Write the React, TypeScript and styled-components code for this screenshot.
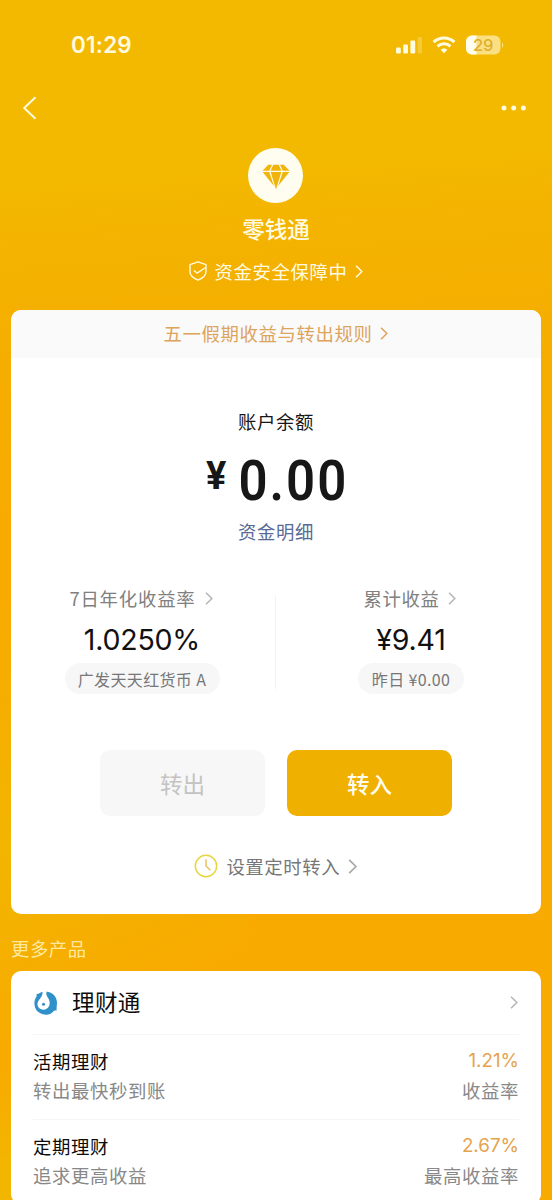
import React from "react";
import styled, { createGlobalStyle } from "styled-components";

const cjk = `"Noto Sans CJK SC", sans-serif`;

const GlobalStyle = createGlobalStyle`
  * { box-sizing: border-box; }
  body { margin: 0; background: #f6ae00; }
`;

const Page = styled.main`
  width: 552px;
  height: 1200px;
  overflow: hidden;
  display: flex;
  flex-direction: column;
  font-family: ${cjk};
  color: #171717;
  background:
    linear-gradient(155deg, rgba(242, 181, 0, 1) 0, rgba(242, 181, 0, 0) 70%) 0 850px / 250px 190px no-repeat,
    linear-gradient(180deg, rgba(242, 180, 0, 0), #f2b500 70%) 0 1070px / 12px 130px no-repeat,
    linear-gradient(180deg, rgba(242, 181, 0, 0), #f2b500) 0 600px / 12px 250px no-repeat,
    linear-gradient(176deg, #f3b900 0, #f3b800 15%, #f4b100 23%, #f6ad00 32%, #f8aa00 42%, #f8aa00 100%);

  > * {
    flex-shrink: 0;
  }
`;

const StatusBar = styled.header`
  display: flex;
  justify-content: space-between;
  align-items: center;
  height: 90px;
  padding: 0 48px 0 71px;
  color: #fffbe0;
`;

const Clock = styled.time`
  font: 600 22.4px/26px Inter, sans-serif;
  letter-spacing: 0.25px;
`;

const StatusIcons = styled.div`
  display: flex;
  align-items: center;
  gap: 10px;
`;

const NavBar = styled.nav`
  display: flex;
  justify-content: space-between;
  align-items: center;
  height: 35px;
  padding: 0 25px 0 22px;
`;

const Hero = styled.section`
  display: flex;
  flex-direction: column;
  align-items: center;
  height: 185px;
  padding-top: 23px;
  color: #fffbe3;
`;

const Emblem = styled.div`
  display: grid;
  place-items: center;
  width: 55px;
  height: 55px;
  padding-top: 2px;
  margin-right: 1px;
  border-radius: 50%;
  background: #fffdf0;
`;

const Title = styled.h1`
  margin: 9px 0 0;
  font-size: 22.5px;
  line-height: 32px;
  font-weight: 500;
`;

const IconRow = styled.div<{ $gap: number }>`
  display: flex;
  align-items: center;
  justify-content: center;
  gap: ${(p) => p.$gap}px;
`;

const Secure = styled(IconRow)`
  height: 28px;
  margin-top: 13px;
`;

const Text = styled.span<{ $color?: string; $spacing?: number }>`
  font-size: 18.4px;
  line-height: 28px;
  letter-spacing: ${(p) => p.$spacing ?? 0.6}px;
  color: ${(p) => p.$color ?? "inherit"};
  white-space: nowrap;
`;

const Card = styled.section<{ $height: number }>`
  height: ${(p) => p.$height}px;
  margin: 0 11px;
  border-radius: 10px;
  background: #fff;
  overflow: hidden;
`;

const Notice = styled(IconRow)`
  height: 48px;
  padding-bottom: 2px;
  background: #fafafb;
`;

const Balance = styled.div`
  display: flex;
  flex-direction: column;
  align-items: center;
  padding-top: 49px;
`;

const Amount = styled.div`
  display: flex;
  align-items: flex-start;
  gap: 11px;
  height: 66px;
  margin: 13px 0 3px;
  padding-left: 2px;
  font: 600 56px/66px Roboto, sans-serif;
`;

const Currency = styled.span`
  display: flex;
  justify-content: center;
  width: 21px;
  font-size: 38px;
  line-height: 57px;
  font-weight: 700;
`;

const Figure = styled.span`
  margin: 0 -5px;
  letter-spacing: 2.2px;
  transform: scaleX(0.91);
`;

const Stats = styled.div`
  display: grid;
  grid-template-columns: 264px 1px 1fr;
  height: 110px;
  margin-top: 39px;
`;

const Stat = styled.div<{ $padding: string }>`
  display: flex;
  flex-direction: column;
  align-items: center;
  padding: ${(p) => p.$padding};
`;

const StatLabel = styled(IconRow)`
  margin-right: 2px;
`;

const Rule = styled.div`
  height: 94px;
  margin-top: 11px;
  background: #f3f3f3;
`;

const Value = styled.strong`
  font: 400 28.5px/36px Inter, sans-serif;
  letter-spacing: -0.2px;
  margin: 10px 0 5px;
  color: #111;
`;

const Pill = styled.span<{ $width: number }>`
  display: grid;
  place-items: center;
  width: ${(p) => p.$width}px;
  height: 31px;
  border-radius: 16px;
  background: #f7f7f7;
  color: #777;
  font-size: 16px;
  line-height: 30px;
  letter-spacing: 0.35px;
  white-space: nowrap;
`;

const Actions = styled.div`
  display: flex;
  justify-content: center;
  gap: 22px;
  margin: 56px 0 0;
`;

const Button = styled.button<{ $primary?: boolean }>`
  width: 165px;
  height: 66px;
  padding: 0;
  border: 0;
  border-radius: 10px;
  background: ${(p) => (p.$primary ? "#f0b000" : "#f7f7f7")};
  color: ${(p) => (p.$primary ? "#fffdf0" : "#c3c3c3")};
  font: ${(p) => (p.$primary ? 500 : 400)} 22.5px/32px ${cjk};
`;

const Schedule = styled(IconRow)`
  margin-top: 36px;
`;

const SectionTitle = styled.h2`
  margin: 0;
  padding: 20px 11px 9px;
  height: 57px;
  font-size: 18.4px;
  line-height: 28px;
  letter-spacing: 0.5px;
  font-weight: 400;
  color: #ffe9a0;
`;

const ProductHead = styled.div`
  display: flex;
  align-items: center;
  height: 63px;
  padding: 0 23px 0 23px;
`;

const ProductName = styled.h3`
  flex: 1;
  margin: -3px 0 0 14px;
  font-size: 22.5px;
  line-height: 32px;
  font-weight: 400;
  letter-spacing: 0.4px;
  color: #0c0c0c;
`;

const Product = styled.div`
  display: flex;
  justify-content: space-between;
  height: 85px;
  margin: 0 22px;
  padding-top: 12px;
  border-top: 1px solid #f5f5f5;
`;

const Lines = styled.div<{ $end?: boolean }>`
  display: flex;
  flex-direction: column;
  gap: 1px;
  align-items: ${(p) => (p.$end ? "flex-end" : "flex-start")};
`;

const Rate = styled.span`
  font: 400 18.8px/28px Inter, sans-serif;
  color: #e5a34d;
`;

const Chevron = ({ color, h = 13, w = 1.5 }: { color: string; h?: number; w?: number }) => (
  <svg width={h * 0.62} height={h} viewBox="0 0 8 13" fill="none" stroke={color} strokeWidth={w}>
    <path d="M1 0.8 6.8 6.5 1 12.2" />
  </svg>
);

const Signal = () => (
  <svg width="26" height="18" viewBox="0 0 26 18" fill="#fffbe0">
    <rect x="0" y="11.5" width="4.8" height="6" rx="1.3" />
    <rect x="7.2" y="8.5" width="4.8" height="9" rx="1.3" />
    <rect x="14.4" y="4.5" width="4.8" height="13" rx="1.3" />
    <rect x="21.6" y="1" width="4.4" height="16.5" rx="1.3" opacity=".25" />
  </svg>
);

const Wifi = () => (
  <svg width="24" height="18" viewBox="0 0 24 18" fill="none" stroke="#fffbe0" strokeWidth="3">
    <path d="M1.6 6.1a15 15 0 0 1 20.8 0" />
    <path d="M5.6 10.4a9.2 9.2 0 0 1 12.8 0" />
    <path d="M12 17.3 8.6 13.8a5 5 0 0 1 6.8 0Z" fill="#fffbe0" stroke="none" />
  </svg>
);

const Battery = () => (
  <svg width="38" height="20" viewBox="0 0 38 20">
    <rect x="0" y="0.5" width="34.5" height="19" rx="6" fill="#fbdf83" />
    <path d="M10.5.5H6a6 6 0 0 0-6 6v7a6 6 0 0 0 6 6h4.5Z" fill="#fffdf0" />
    <path d="M36 7.2q2.6 2.8 0 5.6Z" fill="#fbdf83" />
    <text x="17.2" y="15.7" textAnchor="middle" fontFamily="Inter, sans-serif" fontSize="16.5" fontWeight="500" fill="#dfb02c">29</text>
  </svg>
);

const Diamond = () => (
  <svg width="28" height="26" viewBox="0 0 28 26" fill="#f1b40b">
    <path d="M6.2 0.8H10L7.2 6.7H0.5Z" />
    <path d="M11.3 0.8H16.7L19.5 6.7H8.5Z" />
    <path d="M18 0.8H21.8L27.5 6.7H20.8Z" />
    <path d="M0.7 8H7.3L11.9 22Z" />
    <path d="M8.7 8H19.3L14 25.6Z" />
    <path d="M20.7 8H27.3L16.1 22Z" />
  </svg>
);

const Shield = () => (
  <svg width="18" height="20" viewBox="0 0 18 20" fill="none" stroke="#fffbe3" strokeWidth="1.4">
    <path d="M9 .9 17 3.6v7.2c0 3.8-3.4 6.5-8 8.4-4.6-1.9-8-4.6-8-8.4V3.6Z" strokeLinejoin="round" />
    <path d="M5 9.4 8.1 12.2 16.6 6.5" />
  </svg>
);

const ClockIcon = () => (
  <svg width="24" height="24" viewBox="0 0 24 24" fill="none" stroke="#e6d63f" strokeWidth="1.5">
    <circle cx="12" cy="12" r="10.7" />
    <path d="M12 5.2V12l4.3 4.2" stroke="#edc254" />
  </svg>
);

const Logo = () => (
  <svg width="24" height="24" viewBox="0 0 24 24">
    <path
      fill="#2f90ca"
      d="M13.3.8C19 1.6 23 6.2 23 11.8c0 2.7-.8 5-.3 7.7l-2.3.1A11.3 11.3 0 0 1 .4 12.5C.3 9.7 1.2 7.3 2.7 5.2L2.600 3 4.500 2.800C5.600 1.900 6.600 1.400 8 1Z"
    />
    <path
      fill="#fff"
      d="M8.600.3h4.300c-1.700 3.200.6 5.400 1.900 7.900 2.600 5.400-.6 10.500-5.400 10.500-4 0-6.200-3-5.900-6.100C3.900 8.800 9.100 6.200 8.600.3Z"
    />
    <circle cx="9.500" cy="13.200" r="1.500" fill="#2f90ca" />
  </svg>
);

const products = [
  { name: "活期理财", note: "转出最快秒到账", rate: "1.21%", label: "收益率" },
  { name: "定期理财", note: "追求更高收益", rate: "2.67%", label: "最高收益率" },
];

export default function App() {
  return (
    <Page>
      <GlobalStyle />
      <StatusBar>
        <Clock>01:29</Clock>
        <StatusIcons>
          <Signal />
          <Wifi />
          <Battery />
        </StatusIcons>
      </StatusBar>
      <NavBar>
        <svg width="15" height="24" viewBox="0 0 15 24" fill="none" stroke="#fffbe0" strokeWidth="2">
          <path d="M13.5 1.2 2.2 12l11.3 10.8" />
        </svg>
        <svg width="26" height="6" viewBox="0 0 26 6" fill="#fffbe0">
          <circle cx="3" cy="3" r="2.5" />
          <circle cx="12.7" cy="3" r="2.5" />
          <circle cx="22.4" cy="3" r="2.5" />
        </svg>
      </NavBar>
      <Hero>
        <Emblem>
          <Diamond />
        </Emblem>
        <Title>零钱通</Title>
        <Secure $gap={8}>
          <Shield />
          <Text>资金安全保障中</Text>
          <Chevron color="#fffbe3" />
        </Secure>
      </Hero>

      <Card $height={604}>
        <Notice $gap={8}>
          <Text $color="#dda45c">五一假期收益与转出规则</Text>
          <Chevron color="#dda45c" />
        </Notice>
        <Balance>
          <Text>账户余额</Text>
          <Amount>
            <Currency>¥</Currency>
            <Figure>0.00</Figure>
          </Amount>
          <Text $color="#586b95">资金明细</Text>
        </Balance>
        <Stats>
          <Stat $padding="0 2px 0 0">
            <StatLabel $gap={9}>
              <Text $color="#808080" $spacing={0.8}>7日年化收益率</Text>
              <Chevron color="#b5b5b5" />
            </StatLabel>
            <Value>1.0250%</Value>
            <Pill $width={155}>广发天天红货币 A</Pill>
          </Stat>
          <Rule />
          <Stat $padding="0 0 0 5px">
            <StatLabel $gap={9}>
              <Text $color="#808080">累计收益</Text>
              <Chevron color="#b5b5b5" />
            </StatLabel>
            <Value>¥9.41</Value>
            <Pill $width={106}>昨日 ¥0.00</Pill>
          </Stat>
        </Stats>
        <Actions>
          <Button>转出</Button>
          <Button $primary>转入</Button>
        </Actions>
        <Schedule $gap={8}>
          <ClockIcon />
          <Text $color="#777">设置定时转入</Text>
          <Chevron color="#aaa" h={15} />
        </Schedule>
      </Card>

      <SectionTitle>更多产品</SectionTitle>

      <Card $height={233}>
        <ProductHead>
          <Logo />
          <ProductName>理财通</ProductName>
          <Chevron color="#b5b5b5" />
        </ProductHead>
        {products.map((p) => (
          <Product key={p.name}>
            <Lines>
              <Text $color="#0c0c0c">{p.name}</Text>
              <Text $color="#888">{p.note}</Text>
            </Lines>
            <Lines $end>
              <Rate>{p.rate}</Rate>
              <Text $color="#888">{p.label}</Text>
            </Lines>
          </Product>
        ))}
      </Card>
    </Page>
  );
}
